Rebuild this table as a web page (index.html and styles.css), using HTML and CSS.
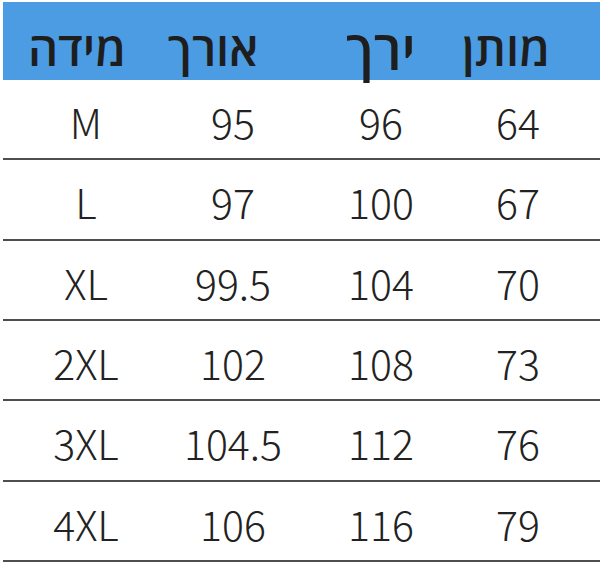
FILE: index.html
```html
<!DOCTYPE html>
<html lang="he">
<head>
<meta charset="utf-8">
<link rel="stylesheet" href="styles.css">
</head>
<body>
<div class="table">
  <div class="head">
    <div class="hc h1">מידה</div>
    <div class="hc h2">אורך</div>
    <div class="hc h3">ירך</div>
    <div class="hc h4">מותן</div>
  </div>
  <div class="row"><div class="c">M</div><div class="c">95</div><div class="c">96</div><div class="c">64</div></div>
  <div class="row"><div class="c">L</div><div class="c">97</div><div class="c">100</div><div class="c">67</div></div>
  <div class="row"><div class="c">XL</div><div class="c">99.5</div><div class="c">104</div><div class="c">70</div></div>
  <div class="row"><div class="c">2XL</div><div class="c">102</div><div class="c">108</div><div class="c">73</div></div>
  <div class="row"><div class="c">3XL</div><div class="c">104.5</div><div class="c">112</div><div class="c">76</div></div>
  <div class="row"><div class="c">4XL</div><div class="c">106</div><div class="c">116</div><div class="c">79</div></div>
</div>
</body>
</html>
```
FILE: styles.css
```css
html, body {
  margin: 0;
  padding: 0;
  background: #ffffff;
}
.table {
  margin: 2px 0 0 3px;
  width: 597px;
}
.head {
  height: 78px;
  background: #4b9ce2;
  display: flex;
  align-items: center;
  font-family: "Open Sans", "Liberation Sans", sans-serif;
  font-size: 47px;
  font-weight: 600;
  color: #1e1e1e;
}
.hc {
  flex: none;
  display: flex;
  justify-content: center;
  white-space: nowrap;
  padding-top: 14px;
}
.h1 { width: 148px; }
.h2 { width: 124px; }
.h3 { width: 212px; font-size: 54px; padding-top: 16px; }
.h4 { width: 38px; }
.row {
  box-sizing: border-box;
  height: 80.33px;
  border-bottom: 2px solid #4e4e4e;
  display: grid;
  grid-template-columns: 166px 128px 168px 106px;
  align-items: center;
  font-family: "Noto Sans CJK SC", "Noto Sans", sans-serif;
  font-size: 41px;
  font-weight: 300;
  color: #222222;
}
.c {
  text-align: center;
  white-space: nowrap;
  padding-top: 4px;
}
```
